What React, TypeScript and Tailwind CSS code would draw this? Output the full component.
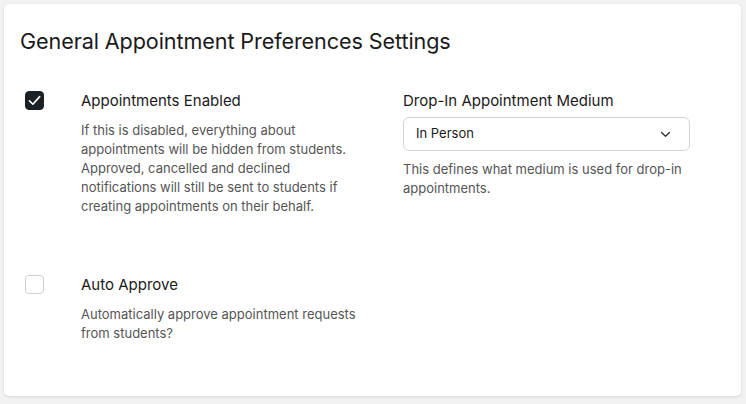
import React, { useState } from 'react'

const Check = ({ checked, onClick }: { checked: boolean; onClick: () => void }) => (
  <button
    onClick={onClick}
    className={`w-[19px] h-[19px] rounded-[4px] flex items-center justify-center shrink-0 ${checked ? 'bg-[#1b2227] border border-[#1b2227]' : 'bg-white border border-[#d0d0d0]'}`}
  >
    {checked && (
      <svg width="15" height="15" viewBox="0 0 14 14" fill="none">
        <path d="M2.3 7.4 L5.5 10.5 L11.8 3.4" stroke="white" strokeWidth="1.5" strokeLinecap="round" strokeLinejoin="round" />
      </svg>
    )}
  </button>
)

export default function App() {
  const [enabled, setEnabled] = useState(true)
  const [autoApprove, setAutoApprove] = useState(false)

  return (
    <div className="w-[746px] h-[404px] bg-[#f2f2f2] p-[4px] pb-[8px] pr-[5px]" style={{ fontFamily: 'Inter, "Noto Sans", sans-serif' }}>
      <div className="w-full h-full bg-white rounded-[5px] shadow-[0_1px_3px_rgba(0,0,0,0.12)] px-[16px] pt-[25px]">
        <h2 className="text-[21.6px] leading-[24px] text-[#1a1a1a] tracking-[-0.1px]">General Appointment Preferences Settings</h2>

        <div className="flex mt-[37px]">
          <div className="w-[383px] flex flex-col gap-[58px]">
            <div className="flex">
              <div className="w-[61px] pl-[5px] pt-[1px]">
                <Check checked={enabled} onClick={() => setEnabled(!enabled)} />
              </div>
              <div className="w-[285px]">
                <p className="text-[15px] leading-[22px] text-[#1a1a1a]">Appointments Enabled</p>
                <p className="mt-[9px] text-[13px] leading-[19px] text-[#555]">
                  If this is disabled, everything about appointments will be hidden from students. Approved, cancelled and declined notifications will still be sent to students if creating appointments on their behalf.
                </p>
              </div>
            </div>

            <div className="flex">
              <div className="w-[61px] pl-[5px] pt-[1px]">
                <Check checked={autoApprove} onClick={() => setAutoApprove(!autoApprove)} />
              </div>
              <div className="w-[285px]">
                <p className="text-[15px] leading-[22px] text-[#1a1a1a]">Auto Approve</p>
                <p className="mt-[9px] text-[13px] leading-[19px] text-[#555]">
                  Automatically approve appointment requests from students?
                </p>
              </div>
            </div>
          </div>

          <div className="w-[287px]">
            <p className="text-[15px] leading-[22px] text-[#1a1a1a]">Drop-In Appointment Medium</p>
            <button className="mt-[5px] w-full h-[34px] border border-[#d4d4d4] rounded-[6px] flex items-center justify-between pl-[12px] pr-[18px]">
              <span className="text-[13px] text-[#1a1a1a]">In Person</span>
              <svg width="11" height="7" viewBox="0 0 11 7" fill="none">
                <path d="M1.5 1.5 L5.5 5.3 L9.5 1.5" stroke="#333" strokeWidth="1.3" strokeLinecap="round" strokeLinejoin="round" />
              </svg>
            </button>
            <p className="mt-[9px] text-[13px] leading-[19px] text-[#555]">
              This defines what medium is used for drop-in appointments.
            </p>
          </div>
        </div>
      </div>
    </div>
  )
}
